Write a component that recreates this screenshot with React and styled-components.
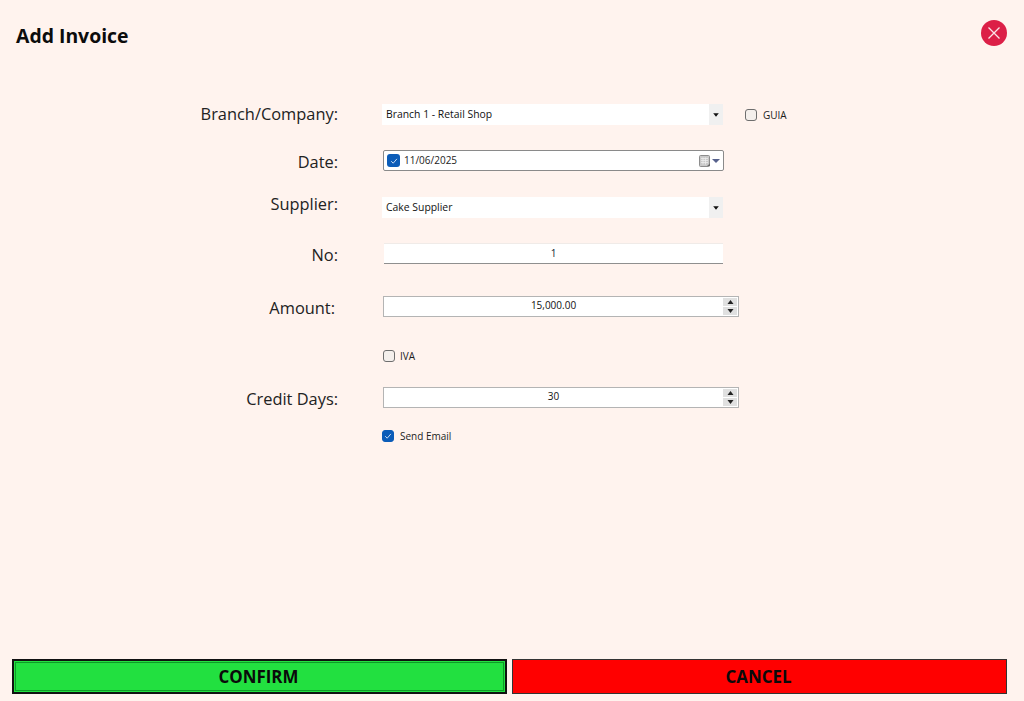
import React from 'react';
import styled, { createGlobalStyle } from 'styled-components';

const GlobalStyle = createGlobalStyle`
  html, body { margin: 0; padding: 0; background: #fff3ee; }
  body { font-family: "Open Sans", "Noto Sans", sans-serif; color: #1b1b1b; }
`;

const CheckMark = () => (
    <svg width="8" height="8" viewBox="0 0 8 8" fill="none">
        <path d="M1.2 4.2 L3.2 6.2 L6.9 1.9" stroke="#dce8f6" strokeWidth="0.9" />
    </svg>
);

const Caret = () => (
    <svg width="6" height="4" viewBox="0 0 6 4"><path d="M0.2 0.2 H5.8 L3 3.8 Z" fill="#111" /></svg>
);

const SpinArrow = ({ up }) => (
    <svg width="7" height="4" viewBox="0 0 7 4">
        <path d={up ? 'M0.5 4 H6.5 L3.5 0 Z' : 'M0.5 0 H6.5 L3.5 4 Z'} fill="#222" />
    </svg>
);

const CalendarIcon = () => (
    <svg width="12" height="12" viewBox="0 0 12 12">
        <rect x="0.5" y="0.5" width="10" height="11" rx="1" fill="#c9c9c9" stroke="#8d8d8d" />
        <path d="M2 3.5H9M2 5.5H9M2 7.5H9M4 2.5V9.5M6.5 2.5V9.5" stroke="#eeeeee" strokeWidth="0.8" />
        <path d="M8 11L11 8.5V11Z" fill="#6b6b6b" />
    </svg>
);

const SelectBox = ({ value }) => (
    <Combo>
        <ComboText>{value}</ComboText>
        <ComboButton><Caret /></ComboButton>
    </Combo>
);

const NumberBox = ({ value }) => (
    <Spin>
        <SpinValue>{value}</SpinValue>
        <SpinButtons>
            <SpinButton><SpinArrow up /></SpinButton>
            <SpinButton><SpinArrow /></SpinButton>
        </SpinButtons>
    </Spin>
);

const CheckField = ({ checked, gap, children }) => (
    <CheckLabel $gap={gap}>
        <CheckBox $checked={checked}>{checked && <CheckMark />}</CheckBox>
        {children}
    </CheckLabel>
);

const App = () => {
    return (
        <Page>
            <GlobalStyle />
            <Header>
                <Title>Add Invoice</Title>
                <CloseButton>
                    <svg width="14" height="14" viewBox="0 0 14 14" fill="none">
                        <path d="M1.5 1.5 L12.5 12.5 M12.5 1.5 L1.5 12.5" stroke="#fbe4e8" strokeWidth="1.3" />
                    </svg>
                </CloseButton>
            </Header>

            <Form>
                <Row $height={21}>
                    <FieldLabel $shift={-1}>Branch/Company:</FieldLabel>
                    <RowControls>
                        <SelectBox value="Branch 1 - Retail Shop" />
                        <CheckField gap={6}>GUIA</CheckField>
                    </RowControls>
                </Row>
                <Row $height={21} $top={25}>
                    <FieldLabel $shift={1}>Date:</FieldLabel>
                    <DateBox>
                        <DateCheck><CheckMark /></DateCheck>
                        <DateText>11/06/2025</DateText>
                        <CalendarIcon />
                        <DateCaret />
                    </DateBox>
                </Row>
                <Row $height={21} $top={26}>
                    <FieldLabel $shift={-4}>Supplier:</FieldLabel>
                    <SelectBox value="Cake Supplier" />
                </Row>
                <Row $height={21} $top={25}>
                    <FieldLabel $shift={1}>No:</FieldLabel>
                    <PlainInput>1</PlainInput>
                </Row>
                <Row $height={21} $top={32}>
                    <FieldLabel $shift={1} $inset={3}>Amount:</FieldLabel>
                    <NumberBox value="15,000.00" />
                </Row>
                <Row $height={16} $top={31}>
                    <span />
                    <CheckField gap={5}>IVA</CheckField>
                </Row>
                <Row $height={21} $top={23}>
                    <FieldLabel $shift={1}>Credit Days:</FieldLabel>
                    <NumberBox value="30" />
                </Row>
                <Row $height={16} $top={20}>
                    <span />
                    <SendEmailField>
                        <CheckField checked gap={6}>Send Email</CheckField>
                    </SendEmailField>
                </Row>
            </Form>

            <Footer>
                <ConfirmButton>CONFIRM</ConfirmButton>
                <CancelButton>CANCEL</CancelButton>
            </Footer>
        </Page>
    );
};

export default App;

const Page = styled.div`
    width: 1024px;
    height: 701px;
    display: flex;
    flex-direction: column;
    background: #fff3ee;
    overflow: hidden;
`;

const Header = styled.div`
    display: flex;
    align-items: center;
    justify-content: space-between;
    height: 27px;
    padding: 19px 17px 0 16px;
`;

const Title = styled.h1`
    margin: 5px 0 0;
    font-size: 19.4px;
    font-weight: 700;
    color: #0c0c0c;
    line-height: 27px;
`;

const CloseButton = styled.div`
    width: 26px;
    height: 26px;
    border-radius: 50%;
    background: #dc1f47;
    display: flex;
    align-items: center;
    justify-content: center;
`;

const Form = styled.div`
    flex: 1;
    display: flex;
    flex-direction: column;
    padding-top: 58px;
`;

const Row = styled.div`
    display: grid;
    grid-template-columns: 338px auto;
    column-gap: 45px;
    justify-content: start;
    align-items: start;
    height: ${p => p.$height}px;
    margin-top: ${p => p.$top || 0}px;
`;

const RowControls = styled.div`
    display: flex;
    align-items: center;
    gap: 22px;
`;

const FieldLabel = styled.label`
    font-size: 16.4px;
    line-height: 21px;
    text-align: right;
    color: #222;
    margin-top: ${p => p.$shift || 0}px;
    padding-right: ${p => p.$inset || 0}px;
`;

const Combo = styled.div`
    width: 341px;
    height: 21px;
    margin-left: -1px;
    display: flex;
    background: #fff;
`;

const ComboText = styled.div`
    flex: 1;
    padding-left: 4px;
    font-size: 10.4px;
    line-height: 21px;
    color: #111;
`;

const ComboButton = styled.div`
    width: 14px;
    background: #f0f0f0;
    display: flex;
    align-items: center;
    justify-content: center;
`;

const DateBox = styled.div`
    box-sizing: border-box;
    width: 341px;
    height: 21px;
    display: flex;
    align-items: center;
    background: #fff;
    border: 1px solid #8a8a8a;
    border-radius: 2px;
    padding: 0 3px 0 3px;
`;

const DateCheck = styled.div`
    width: 13px;
    height: 13px;
    border-radius: 3px;
    background: #0b5cb8;
    display: flex;
    align-items: center;
    justify-content: center;
`;

const DateText = styled.div`
    flex: 1;
    padding-left: 4px;
    font-size: 10px;
    line-height: 17px;
    margin-bottom: 1px;
    color: #222;
`;

const DateCaret = styled.div`
    width: 0;
    height: 0;
    margin-left: 1px;
    border-left: 4px solid transparent;
    border-right: 4px solid transparent;
    border-top: 4px solid #56618c;
`;

const PlainInput = styled.div`
    box-sizing: border-box;
    width: 339px;
    height: 21px;
    margin-left: 1px;
    background: #fff;
    border-top: 1px solid #f0ebe8;
    border-bottom: 1px solid #8f8f8f;
    text-align: center;
    font-size: 10px;
    line-height: 18px;
    color: #123;
`;

const Spin = styled.div`
    box-sizing: border-box;
    width: 356px;
    height: 21px;
    display: flex;
    align-items: center;
    background: #fff;
    border: 1px solid #b4b4b4;
`;

const SpinValue = styled.div`
    flex: 1;
    text-align: center;
    font-size: 10px;
    line-height: 17px;
    margin-bottom: 2px;
    color: #111;
`;

const SpinButtons = styled.div`
    width: 14px;
    display: flex;
    flex-direction: column;
    gap: 1px;
    padding-right: 1px;
`;

const SpinButton = styled.div`
    height: 8px;
    background: #e0e0e0;
    display: flex;
    align-items: center;
    justify-content: center;
`;

const SendEmailField = styled.div`
    margin-left: -1px;
`;

const CheckLabel = styled.label`
    display: flex;
    align-items: center;
    gap: ${p => p.$gap}px;
    font-size: 10px;
    line-height: 16px;
    color: #1c1c1c;
`;

const CheckBox = styled.span`
    box-sizing: border-box;
    width: 12px;
    height: 12px;
    border-radius: 3px;
    display: flex;
    align-items: center;
    justify-content: center;
    background: ${p => (p.$checked ? '#0b5cb8' : '#f4efec')};
    border: 1px solid ${p => (p.$checked ? '#0b5cb8' : '#6e6e6e')};
`;

const Footer = styled.div`
    display: grid;
    grid-template-columns: 1fr 1fr;
    gap: 5px;
    padding: 0 17px 7px 12px;
`;

const ActionButton = styled.button`
    box-sizing: border-box;
    height: 35px;
    padding: 0 2px 0 0;
    font-family: inherit;
    font-size: 16.9px;
    font-weight: 700;
    color: #0a0a0a;
    cursor: pointer;
`;

const ConfirmButton = styled(ActionButton)`
    background: #22e040;
    border: 2px solid #111;
    outline: 1px solid #0f9a28;
    outline-offset: -4px;
`;

const CancelButton = styled(ActionButton)`
    background: #ff0000;
    border: 1px solid #333;
`;
